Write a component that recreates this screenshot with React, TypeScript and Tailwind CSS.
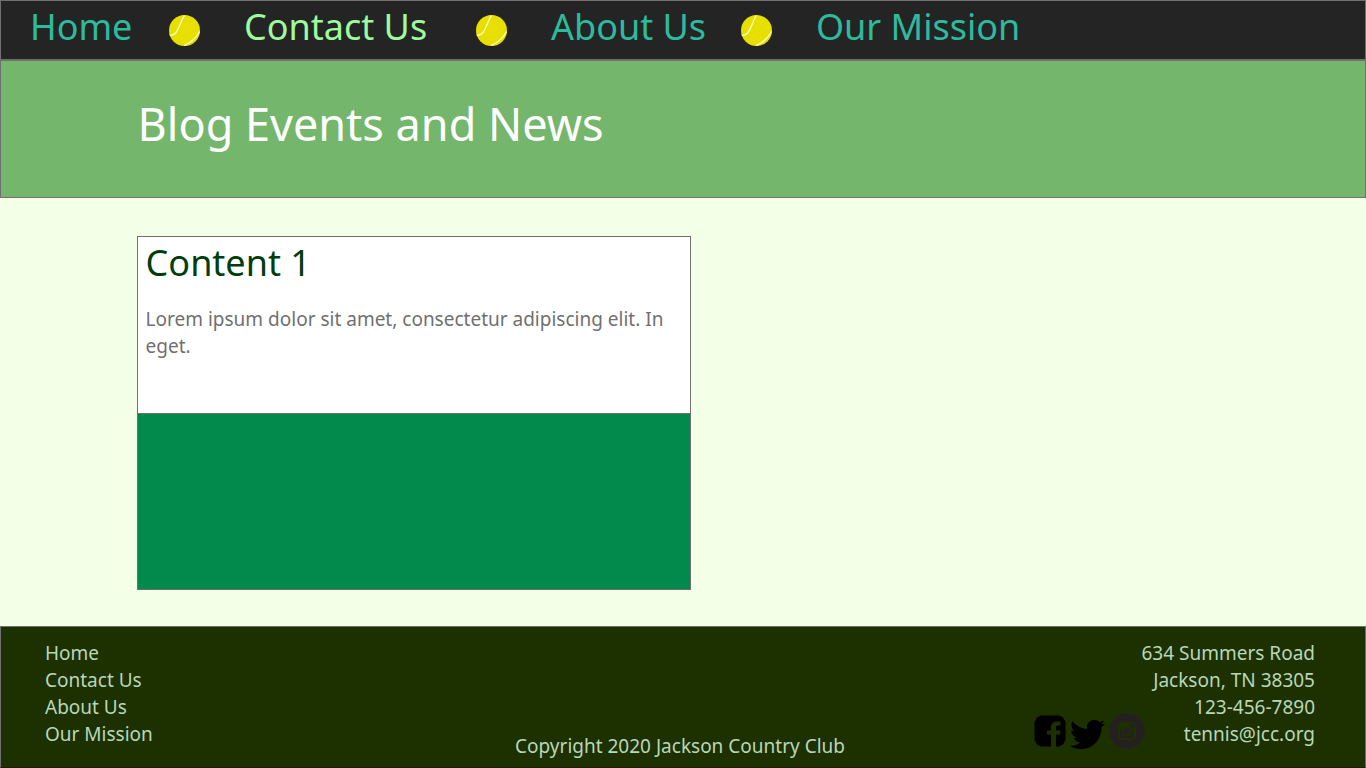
const navItems = [
  { label: 'Home', href: '#home', slot: 'w-[139px]', color: 'text-[#2dbb9d]' },
  { label: 'Contact Us', href: '#contact', slot: 'w-[232px]', color: 'text-[#9dfb9d]' },
  { label: 'About Us', href: '#about', slot: 'w-[190px]', color: 'text-[#2dbb9d]' },
  { label: 'Our Mission', href: '#mission', slot: '', color: 'text-[#2dbb9d]' },
];

function TennisBall() {
  return (
    <svg viewBox="0 0 31 31" className="mr-11 size-[31px] shrink-0" aria-hidden="true">
      <circle cx="15.5" cy="15.5" r="15.5" fill="#e7df00" />
      <path
        d="M15.500 0.500C12 5 11 12 7 17.500C5 20.300 3 20.700 0.700 20M15 30.700C21 28 27.500 22.500 30.500 16.500"
        fill="none"
        stroke="#fffcb8"
        strokeWidth="1.300"
      />
    </svg>
  );
}

function FacebookIcon() {
  return (
    <svg viewBox="0 0 32 32" className="size-8" aria-hidden="true">
      <path
        fill="#000"
        d="M7 0.500H25L29 2.500L31.500 7V25L29 29.500L25 31.500H22V19.500H26L26.500 15.500H22V12.500C22 11 22.700 10.500 24 10.500H26.500V6.500H23C19 6.500 17 9 17 12V15.500H13V19.500H17V31.500H7L3 29.500L0.500 25V7L3 2.500Z"
      />
    </svg>
  );
}

function TwitterIcon() {
  return (
    <svg viewBox="0 2.300 24 19.500" preserveAspectRatio="none" className="h-[29px] w-[35px]" aria-hidden="true">
      <path
        fill="#000"
        d="M23.953 4.570a10 10 0 0 1-2.825.775 4.958 4.958 0 0 0 2.163-2.723c-.951.555-2.005.959-3.127 1.184a4.920 4.920 0 0 0-8.384 4.482C7.690 8.095 4.067 6.130 1.640 3.162a4.822 4.822 0 0 0-.666 2.475c0 1.710.870 3.213 2.188 4.096a4.904 4.904 0 0 1-2.228-.616v.06a4.923 4.923 0 0 0 3.946 4.827 4.996 4.996 0 0 1-2.212.085 4.936 4.936 0 0 0 4.604 3.417 9.867 9.867 0 0 1-6.102 2.105c-.390 0-.779-.023-1.170-.067a13.995 13.995 0 0 0 7.557 2.209c9.053 0 13.998-7.496 13.998-13.985 0-.210 0-.420-.015-.630A9.935 9.935 0 0 0 24 4.590z"
      />
    </svg>
  );
}

function InstagramIcon() {
  return (
    <svg viewBox="0 0 36 36" className="size-9" aria-hidden="true">
      <circle cx="18" cy="18" r="17.500" fill="#241f21" />
      <rect x="9" y="9" width="18" height="18" rx="2" fill="#1c3000" />
      <path fill="#241f21" d="M11 16H25V25H11Z" />
      <circle cx="18" cy="18" r="5.500" fill="#1c3000" />
      <circle cx="18" cy="18" r="3.500" fill="#241f21" />
      <rect x="21.500" y="10.500" width="4" height="4" rx="0.500" fill="#241f21" />
    </svg>
  );
}

export default function App() {
  return (
    <div className="flex min-h-screen flex-col bg-[#f3ffe7] font-['Noto_Sans',sans-serif]">
      <nav className="flex h-[60px] items-center border border-[#707070] bg-[#242424] pl-[29px]">
        {navItems.map((item, i) => (
          <div key={item.label} className="flex items-center">
            <a
              href={item.href}
              className={`${item.slot} ${item.color} pb-1.5 text-[36px] leading-[50px] whitespace-nowrap`}
            >
              {item.label}
            </a>
            {i < navItems.length - 1 && <TennisBall />}
          </div>
        ))}
      </nav>

      <header className="h-[138px] border border-[#707070] bg-[#74b66c] px-[10%] pt-8">
        <h1 className="text-[45px] leading-[62px] text-white">Blog Events and News</h1>
      </header>

      <main className="flex-1 px-[10%] pt-[38px] pb-9">
        <article className="w-full max-w-[554px] border border-[#707070] bg-white">
          <div className="h-[177px] border-b border-[#707070] px-2">
            <h2 className="text-[36px] leading-[52px] text-[#003d0b]">Content 1</h2>
            <p className="mt-[17px] text-[19px] leading-[27px] text-[#707070]">
              Lorem ipsum dolor sit amet, consectetur adipiscing elit. In eget.
            </p>
          </div>
          <div className="h-[175px] bg-[#028a4d]" />
        </article>
      </main>

      <footer className="grid min-h-[142px] grid-cols-[1fr_auto_1fr] border border-[#707070] border-b-[#251b08] bg-[#1c3000] pt-[13px] pr-[50px] pl-11 text-[19px] leading-[27px] text-[#b9d7b9]">
        <ul>
          {navItems.map((item) => (
            <li key={item.label}>
              <a href={item.href}>{item.label}</a>
            </li>
          ))}
        </ul>
        <p className="self-end pb-[7px]">Copyright 2020 Jackson Country Club</p>
        <div className="flex items-start justify-end">
          <div className="mt-[73px] -mr-1 flex items-end gap-1">
            <a href="#facebook" aria-label="Facebook" className="mb-0.5">
              <FacebookIcon />
            </a>
            <a href="#twitter" aria-label="Twitter">
              <TwitterIcon />
            </a>
            <a href="#instagram" aria-label="Instagram">
              <InstagramIcon />
            </a>
          </div>
          <address className="text-right whitespace-nowrap not-italic">
            634 Summers Road
            <br />
            Jackson, TN 38305
            <br />
            123-456-7890
            <br />
            tennis@jcc.org
          </address>
        </div>
      </footer>
    </div>
  );
}
